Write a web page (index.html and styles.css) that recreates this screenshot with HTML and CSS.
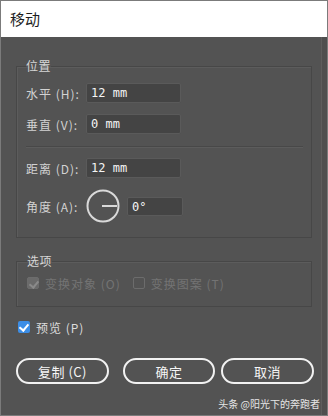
FILE: index.html
```html
<!DOCTYPE html>
<html lang="zh-CN">
<head>
  <meta charset="UTF-8">
  <meta name="viewport" content="width=device-width, initial-scale=1.0">
  <title>移动</title>
  <link rel="stylesheet" href="styles.css">
</head>
<body>
  <div class="dialog">
    <div class="titlebar">移动</div>
    <div class="content">
      <fieldset class="group group-pos">
        <legend>位置</legend>
        <div class="row">
          <span class="label">水平 (H):</span>
          <div class="field">12 mm</div>
        </div>
        <div class="row row-gap">
          <span class="label">垂直 (V):</span>
          <div class="field">0 mm</div>
        </div>
        <div class="sep"></div>
        <div class="row">
          <span class="label">距离 (D):</span>
          <div class="field">12 mm</div>
        </div>
        <div class="row row-angle">
          <span class="label">角度 (A):</span>
          <svg class="dial" width="34" height="34" viewBox="0 0 34 34">
            <circle cx="17" cy="17" r="15.5" fill="none" stroke="#d9d9d9" stroke-width="2"/>
            <line x1="16" y1="17" x2="31" y2="17" stroke="#d9d9d9" stroke-width="2"/>
          </svg>
          <div class="field field-sm">0°</div>
        </div>
      </fieldset>

      <fieldset class="group group-opt">
        <legend>选项</legend>
        <div class="checks">
          <span class="check check-off checked"></span>
          <span class="dim">变换对象 (O)</span>
          <span class="check check-off"></span>
          <span class="dim">变换图案 (T)</span>
        </div>
      </fieldset>

      <div class="preview">
        <span class="check check-on"></span>
        <span class="preview-text">预览 (P)</span>
      </div>

      <div class="buttons">
        <button class="btn">复制 (C)</button>
        <button class="btn btn-ok">确定</button>
        <button class="btn btn-cancel">取消</button>
      </div>

      <div class="mark">头条 @阳光下的奔跑者</div>
    </div>
  </div>
</body>
</html>
```
FILE: styles.css
```css
* {
  margin: 0;
  padding: 0;
  box-sizing: border-box;
}
body {
  width: 328px;
  height: 416px;
  font-family: "Noto Sans CJK SC", "Liberation Sans", sans-serif;
  font-size: 12px;
  color: #d2d2d2;
  background: #535353;
}
.dialog {
  height: 416px;
  border: 1px solid #7b7b7b;
  background: #535353;
  box-shadow: inset -5px 0 0 #4f4f4f, inset -6px 0 0 #5d5d5d;
}
.titlebar {
  height: 36px;
  line-height: 36px;
  padding-left: 9px;
  background: #ffffff;
  color: #1e1e1e;
  font-size: 15px;
}
.content {
  padding: 0 15px;
  height: 378px;
}
.group {
  width: 296px;
  border: 1px solid #474747;
  box-shadow: inset 1px 1px 0 #5c5c5c;
  padding: 9px 0 14px 9px;
}
.group legend {
  line-height: 16px;
  font-size: 12px;
  color: #d6d6d6;
  letter-spacing: 0.5px;
}
.group-pos {
  margin-top: 21px;
}
.row {
  display: flex;
  align-items: center;
  height: 20px;
}
.row-gap {
  margin-top: 11px;
}
.label {
  width: 60px;
  letter-spacing: 1px;
}
.field {
  width: 95px;
  height: 20px;
  line-height: 19px;
  padding-left: 4px;
  background: #444444;
  border: 1px solid #5a5a5a;
  border-radius: 2px;
  color: #f4f4f4;
  font-family: "DejaVu Sans Mono", monospace;
  font-size: 12px;
}
.sep {
  width: 277px;
  height: 2px;
  margin: 12px 0 10px;
  border-top: 1px solid #484848;
  border-bottom: 1px solid #5c5c5c;
}
.row-angle {
  height: 34px;
  margin-top: 11px;
}
.dial {
  display: block;
}
.field-sm {
  width: 56px;
  height: 19px;
  margin-left: 7px;
}
.group-opt {
  margin-top: 15px;
  padding: 6px 0 15px 10px;
}
.checks,
.preview {
  display: flex;
  align-items: center;
  height: 16px;
}
.check {
  width: 12px;
  height: 12px;
  border-radius: 2px;
  margin-right: 6px;
  position: relative;
}
.check.checked::after,
.check-on::after {
  content: "";
  position: absolute;
  left: 3px;
  top: 1px;
  width: 4px;
  height: 7px;
  border: solid #ffffff;
  border-width: 0 2px 2px 0;
  transform: rotate(40deg);
}
.check-off {
  border: 1px solid #6c6c6c;
}
.check-off.checked {
  background: #6a6a6a;
}
.check-off.checked::after {
  border-color: #8a8a8a;
}
.dim {
  color: #737373;
  margin-right: 12px;
  letter-spacing: 1px;
}
.preview {
  margin-top: 12px;
  padding-left: 2px;
  color: #dcdcdc;
}
.preview-text {
  letter-spacing: 1px;
}
.check-on {
  background: #3d8ee6;
}
.buttons {
  display: flex;
  margin-top: 23px;
}
.btn {
  flex: none;
  width: 93px;
  height: 26px;
  border: 2px solid #f2f2f2;
  border-radius: 13px;
  background: transparent;
  color: #f6f6f6;
  font-family: "Noto Sans CJK SC", "Liberation Sans", sans-serif;
  font-size: 13px;
  letter-spacing: 0.5px;
}
.btn-ok {
  width: 92px;
  margin-left: 14px;
}
.btn-cancel {
  margin-left: 6px;
}
.mark {
  margin-top: 12px;
  margin-right: -8px;
  text-align: right;
  font-size: 10px;
  color: #e6e6e6;
}
```
